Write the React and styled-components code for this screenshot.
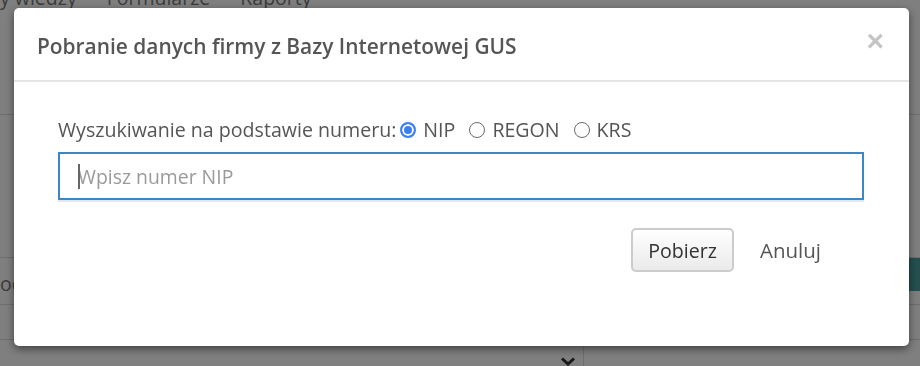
import React from 'react';
import styled, { createGlobalStyle } from 'styled-components';

const Global = createGlobalStyle`
	html, body {
		margin: 0;
		padding: 0;
		background: #fff;
		font-family: "Open Sans", "Noto Sans", sans-serif;
		overflow: hidden;
	}
`

const Page = styled.div`
	width: 920px;
	height: 366px;
	overflow: hidden;
	color: #777;
`
const Nav = styled.div`
	display: flex;
	gap: 30px;
	margin-top: -14px;
	height: 129px;
	border-bottom: 1px solid #ddd;
	font-size: 19.5px;
	box-sizing: border-box;
`
const NavItem = styled.span`
	line-height: 24px;
`
const Rows = styled.div`
	display: flex;
	flex-direction: column;
`
const Row = styled.div`
	height: ${props => props.h}px;
	border-bottom: 1px solid #ddd;
	display: flex;
	align-items: ${props => props.top ? 'flex-start' : 'center'};
	box-sizing: border-box;
	font-size: 19.5px;
`
const TealButton = styled.div`
	width: 40px;
	height: 33px;
	background: #4b9e9e;
	margin-left: auto;
`
const RowText = styled.span`
	margin-top: 12px;
`
const Bottom = styled.div`
	display: flex;
	height: 26px;
`
const SelectBox = styled.div`
	width: 584px;
	border-right: 1px solid #ddd;
	display: flex;
	justify-content: flex-end;
	align-items: flex-end;
	padding-right: 7px;
	box-sizing: border-box;
`

const Overlay = styled.div`
	position: fixed;
	inset: 0;
	background: rgba(0, 0, 0, 0.5);
	padding: 8px 0 0 14px;
`
const Modal = styled.div`
	width: 895px;
	height: 338px;
	background: #fff;
	border-radius: 5px;
	box-shadow: 0 3px 9px rgba(0, 0, 0, 0.5);
	display: flex;
	flex-direction: column;
	color: #555;
`
const Header = styled.div`
	height: 74px;
	border-bottom: 2px solid #e5e5e5;
	display: flex;
	align-items: center;
	justify-content: space-between;
	padding: 3px 25px 0 23px;
	box-sizing: border-box;
`
const Title = styled.h4`
	margin: 0;
	font-size: 20.9px;
	font-weight: 600;
	color: #555;
`
const Close = styled.span`
	font-size: 30px;
	font-weight: 700;
	color: #c4c4c4;
	line-height: 1;
	font-family: "Liberation Sans", Arial, sans-serif;
	margin-top: -9px;
`
const Body = styled.div`
	padding: 35px 45px 0 44px;
`
const LabelRow = styled.div`
	display: flex;
	align-items: center;
	font-size: 19.6px;
	line-height: 26px;
	color: #555;
`
const Label = styled.span`
	margin-right: 4px;
`
const Option = styled.label`
	display: flex;
	align-items: center;
	gap: 7px;
	margin-right: 14px;
`
const Radio = styled.span`
	width: 16px;
	height: 16px;
	border-radius: 50%;
	box-sizing: border-box;
	border: ${props => props.checked ? '2px solid #3a7ff6' : '1px solid #6a6a6a'};
	background: ${props => props.checked ? '#3a7ff6' : '#fff'};
	box-shadow: ${props => props.checked ? 'inset 0 0 0 2px #fff' : 'none'};
`
const InputWrap = styled.div`
	position: relative;
	margin-top: 9px;
`
const Input = styled.input`
	width: 100%;
	height: 48px;
	box-sizing: border-box;
	border: 2px solid #3a87c4;
	box-shadow: 0 2px 0 #e3e8ee;
	padding: 0 18px;
	font-family: inherit;
	font-size: 19.4px;
	color: #555;
	outline: none;
	caret-color: transparent;
	&::placeholder {
		color: #9a9a9a;
	}
`
const Caret = styled.span`
	position: absolute;
	left: 20px;
	top: 12px;
	width: 2px;
	height: 25px;
	background: #666;
`
const Footer = styled.div`
	display: flex;
	justify-content: flex-end;
	align-items: center;
	gap: 14px;
	margin-top: 28px;
	padding-right: 76px;
`
const Button = styled.button`
	height: 44px;
	padding: 0 15px;
	font-family: inherit;
	font-size: 19.6px;
	color: #333;
	background: linear-gradient(#fff, #eaeaea);
	border: 2px solid #ccc;
	border-radius: 5px;
`
const LinkButton = styled.button`
	height: 44px;
	padding: 0 12px;
	font-family: inherit;
	font-size: 20.5px;
	color: #555;
	background: none;
	border: none;
`

const options = [
	{ id: 'nip', label: 'NIP', checked: true },
	{ id: 'regon', label: 'REGON' },
	{ id: 'krs', label: 'KRS' },
];

const App = () => {
	return (
		<>
			<Global />
			<Page>
				<Nav>
					<NavItem>y wiedzy</NavItem>
					<NavItem>Formularze</NavItem>
					<NavItem>Raporty</NavItem>
				</Nav>
				<Rows>
					<Row h={143} />
					<Row h={47} top>
						<RowText>od</RowText>
						<TealButton />
					</Row>
					<Row h={35} />
				</Rows>
				<Bottom>
					<SelectBox>
						<svg width="16" height="9" viewBox="0 0 16 9">
							<path d="M2 1.5 L8 7 L14 1.5" fill="none" stroke="#333" strokeWidth="3" />
						</svg>
					</SelectBox>
				</Bottom>
			</Page>
			<Overlay>
				<Modal>
					<Header>
						<Title>Pobranie danych firmy z Bazy Internetowej GUS</Title>
						<Close>×</Close>
					</Header>
					<Body>
						<LabelRow>
							<Label>Wyszukiwanie na podstawie numeru:</Label>
							{options.map(o => (
								<Option key={o.id}>
									<Radio checked={o.checked} />
									{o.label}
								</Option>
							))}
						</LabelRow>
						<InputWrap>
							<Input placeholder="Wpisz numer NIP" />
							<Caret />
						</InputWrap>
					</Body>
					<Footer>
						<Button>Pobierz</Button>
						<LinkButton>Anuluj</LinkButton>
					</Footer>
				</Modal>
			</Overlay>
		</>
	)
}

export default App;
